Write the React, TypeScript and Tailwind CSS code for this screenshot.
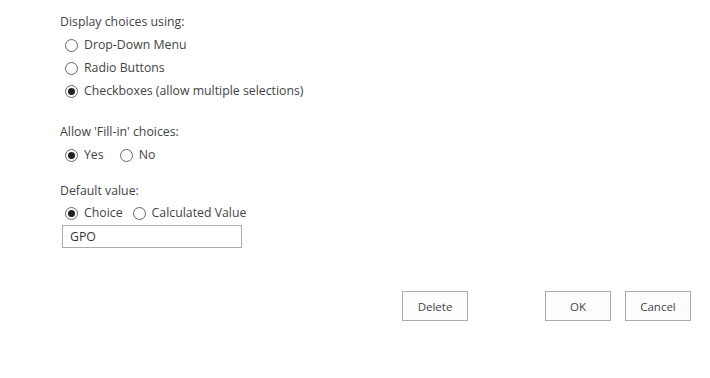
import React from "react";

function Radio({ checked }: { checked?: boolean }) {
  return (
    <span className="inline-flex h-[13px] w-[13px] shrink-0 items-center justify-center rounded-full border border-[#666] bg-white">
      {checked && <span className="h-[7px] w-[7px] rounded-full bg-[#222]" />}
    </span>
  );
}

function Opt({ checked, label }: { checked?: boolean; label: string }) {
  return (
    <span className="flex items-center gap-[6px]">
      <Radio checked={checked} />
      <span>{label}</span>
    </span>
  );
}

function Btn({ label }: { label: string }) {
  return (
    <button className="h-[30px] w-[66px] border border-[#ababab] bg-[#fdfdfd] pt-[2px] text-[11.5px] text-[#444]">
      {label}
    </button>
  );
}

export default function App() {
  return (
    <div
      className="h-[378px] w-[710px] bg-white text-[12.3px] leading-[18px] text-[#444]"
      style={{ fontFamily: '"Open Sans", "Noto Sans", sans-serif' }}
    >
      <div className="flex flex-col pl-[60px] pt-[13px]">
        <div>Display choices using:</div>
        <div className="mt-[5px] flex flex-col gap-[5px] pl-[5px]">
          <Opt label="Drop-Down Menu" />
          <Opt label="Radio Buttons" />
          <Opt checked label="Checkboxes (allow multiple selections)" />
        </div>
        <div className="mt-[23px]">Allow 'Fill-in' choices:</div>
        <div className="mt-[5px] flex gap-[16px] pl-[5px]">
          <Opt checked label="Yes" />
          <Opt label="No" />
        </div>
        <div className="mt-[18px]">Default value:</div>
        <div className="mt-[4px] flex gap-[10px] pl-[5px]">
          <Opt checked label="Choice" />
          <Opt label="Calculated Value" />
        </div>
        <div className="ml-[2px] mt-[3px] flex h-[23px] w-[180px] items-center border border-[#ababab] px-[7px] text-[#333]">
          GPO
        </div>
      </div>
      <div className="mt-[43px] flex pl-[402px]">
        <Btn label="Delete" />
        <div className="ml-[77px]">
          <Btn label="OK" />
        </div>
        <div className="ml-[14px]">
          <Btn label="Cancel" />
        </div>
      </div>
    </div>
  );
}
